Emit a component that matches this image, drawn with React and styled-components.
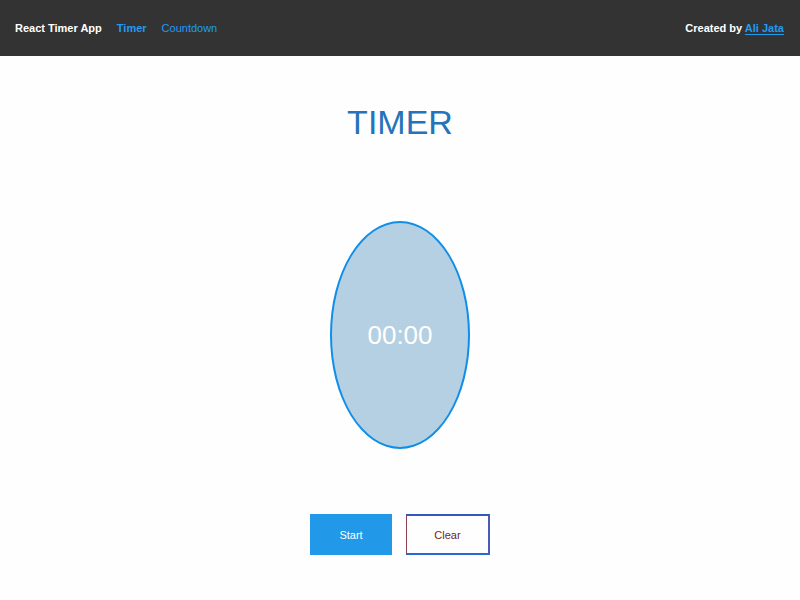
import React, { useEffect, useState } from "react";
import styled, { createGlobalStyle } from "styled-components";

const GlobalStyle = createGlobalStyle`
  * { box-sizing: border-box; }
  body {
    margin: 0;
    background: #fefefe;
    color: #0a0a0a;
    font-family: "Liberation Sans", Arial, sans-serif;
  }
`;

const Page = styled.div`
  display: flex;
  flex-direction: column;
`;

const TopBar = styled.header`
  display: flex;
  align-items: center;
  justify-content: space-between;
  padding: 18px 16px 18px 15px;
  background: #333333;
  color: #ffffff;
  font-size: 11px;
  line-height: 20px;
  font-weight: bold;
  white-space: nowrap;
`;

const Menu = styled.nav`
  display: flex;
  gap: 15px;
`;

const Link = styled.a`
  color: #1f9bf2;
  font-weight: ${(p) => (p.$active ? "bold" : "normal")};
  text-decoration: none;
`;

const AuthorLink = styled.a`
  color: #1f9bf2;
  text-decoration: underline;
  text-underline-offset: 2px;
`;

const Main = styled.main`
  display: flex;
  flex-direction: column;
  align-items: center;
`;

const Title = styled.h1`
  margin: 36px 0 69px;
  color: #2573b8;
  font-size: 34px;
  line-height: 60px;
  font-weight: normal;
`;

const Clock = styled.div`
  display: flex;
  align-items: center;
  justify-content: center;
  width: 140px;
  height: 228px;
  border: 2px solid #0f8fe8;
  border-radius: 50%;
  background: #b5d0e2;
  color: #ffffff;
  font-size: 26px;
`;

const Controls = styled.div`
  display: flex;
  gap: 14px;
  margin-top: 65px;
`;

const Button = styled.button`
  min-width: ${(p) => (p.$hollow ? "84px" : "82px")};
  height: 41px;
  padding: 0 16px;
  border-style: solid;
  border-width: ${(p) => (p.$hollow ? "2px 2px 2px 1px" : "1px")};
  border-color: ${(p) => (p.$hollow ? "#3158bd #4a5cb8 #2869d8 #8c4050" : "#2199e8")};
  background: ${(p) => (p.$hollow ? "#fefefe" : "#2199e8")};
  color: ${(p) => (p.$hollow ? "#701f1c" : "#ffffff")};
  font-family: inherit;
  font-size: 11px;
  cursor: pointer;
`;

const pad = (n) => String(n).padStart(2, "0");

export default function App() {
  const [seconds, setSeconds] = useState(0);
  const [running, setRunning] = useState(false);

  useEffect(() => {
    if (!running) return undefined;
    const id = setInterval(() => setSeconds((s) => s + 1), 1000);
    return () => clearInterval(id);
  }, [running]);

  const clear = () => {
    setRunning(false);
    setSeconds(0);
  };

  return (
    <Page>
      <GlobalStyle />
      <TopBar>
        <Menu>
          <span>React Timer App</span>
          <Link href="#timer" $active aria-current="page">Timer</Link>
          <Link href="#countdown">Countdown</Link>
        </Menu>
        <span>
          Created by <AuthorLink href="#author">Ali Jata</AuthorLink>
        </span>
      </TopBar>
      <Main>
        <Title>TIMER</Title>
        <Clock role="timer">{pad(Math.floor(seconds / 60))}:{pad(seconds % 60)}</Clock>
        <Controls>
          <Button type="button" onClick={() => setRunning(true)}>Start</Button>
          <Button type="button" $hollow onClick={clear}>Clear</Button>
        </Controls>
      </Main>
    </Page>
  );
}
